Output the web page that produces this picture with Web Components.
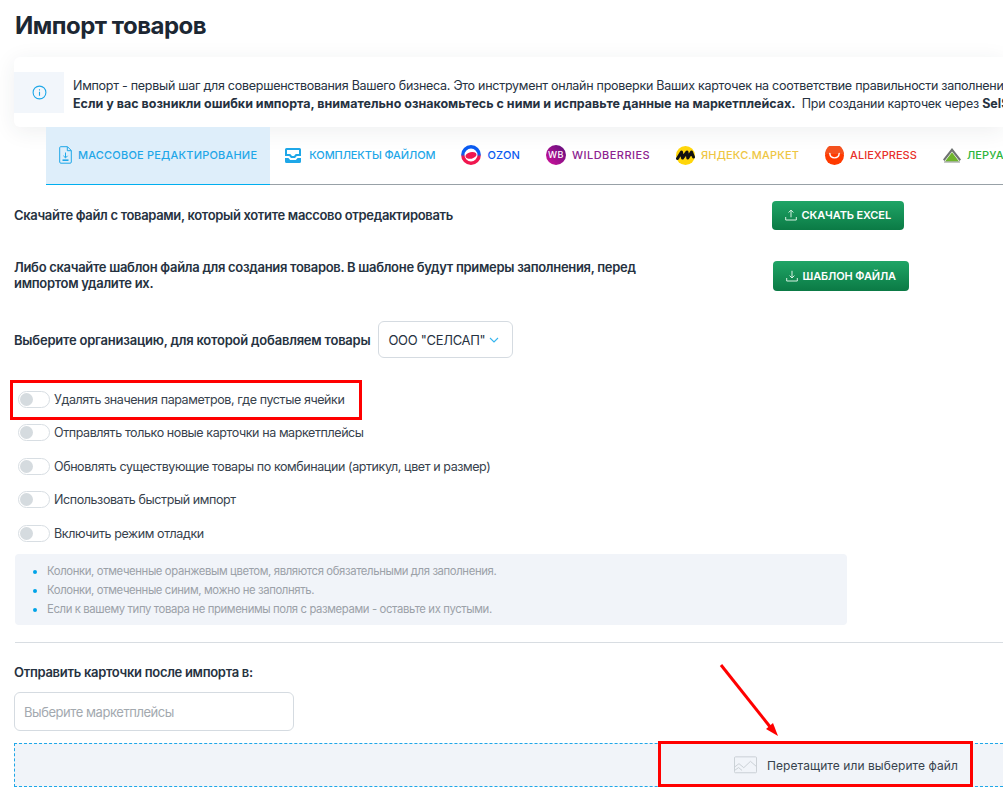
<!DOCTYPE html>
<html lang="ru">
<head>
<meta charset="utf-8">
<title>Импорт товаров</title>
<style>
  html, body { margin: 0; padding: 0; background: #fff; }
  body {
    width: 1003px; height: 795px; overflow: hidden; position: relative;
    font-family: Inter, "Noto Sans", sans-serif; color: #1f2a36;
  }
</style>
</head>
<body>
<import-page></import-page>
<red-marks></red-marks>

<script>
const ICONS = {
  info: `<svg width="15" height="15" viewBox="0 0 15 15" fill="none" stroke="#1ea7e8" stroke-width="1.1"><circle cx="7.5" cy="7.5" r="6.4"/><path d="M7.5 6.8v4M7.5 4.3v1.1"/></svg>`,
  fileDown: `<svg width="13" height="18" viewBox="0 0 13 18" fill="none" stroke="#1ea7e8" stroke-width="1"><path d="M1.7.7h6.8L12.300 4.500V16a1.200 1.200 0 0 1-1.200 1.200H1.900A1.200 1.200 0 0 1 .7 16V1.700A1 1 0 0 1 1.700.7z"/><path d="M8.300.8v3.900h3.900"/><path d="M6.500 6.500v5M4.400 9.800l2.100 2.100 2.100-2.100"/><path d="M3.500 14.200h6" stroke-width="1.600"/></svg>`,
  tray: `<svg width="16" height="15" viewBox="0 0 16 15"><path fill="#1ea7e8" d="M1.500 0h13A1.500 1.500 0 0 1 16 1.500V8h-4.200L10 10H6L4.200 8H0V1.500A1.500 1.500 0 0 1 1.500 0zM2 2v4h3.200L7 8h2l1.800-2H14V2z"/><path fill="#1ea7e8" d="M0 10h3.400L5.200 12h5.600L12.600 10H16v3.500a1.500 1.500 0 0 1-1.500 1.500h-13A1.500 1.500 0 0 1 0 13.500z"/></svg>`,
  ozon: `<svg width="20" height="20" viewBox="0 0 20 20"><defs><linearGradient id="oz" x1="0" y1="0" x2="0" y2="1"><stop offset=".45" stop-color="#0a5bf0"/><stop offset=".6" stop-color="#f0174f"/></linearGradient></defs><circle cx="10" cy="10" r="8.200" fill="#fff" stroke="url(#oz)" stroke-width="3.400"/><ellipse cx="10" cy="10.400" rx="5.600" ry="3.300" fill="#f0174f" transform="rotate(-12 10 10.400)"/></svg>`,
  wb: `<svg width="20" height="20" viewBox="0 0 20 20"><defs><linearGradient id="wbg" x1="0" y1="1" x2="1" y2="0"><stop offset="0" stop-color="#d4119b"/><stop offset="1" stop-color="#5c0f7c"/></linearGradient></defs><circle cx="10" cy="10" r="10" fill="url(#wbg)"/><text x="10" y="13.200" text-anchor="middle" font-family="Inter, sans-serif" font-size="9" font-weight="500" fill="#fff">WB</text></svg>`,
  yandex: `<svg width="19" height="19" viewBox="0 0 19 19"><circle cx="9.500" cy="9.500" r="9.500" fill="#ffd60a"/><path d="M1.500 12.500 5.500 6l1 6L11 6l.8 6L15.500 6l2 5" fill="none" stroke="#111" stroke-width="3" stroke-linecap="round" stroke-linejoin="round"/></svg>`,
  ali: `<svg width="19" height="19" viewBox="0 0 19 19"><circle cx="9.500" cy="9.500" r="9.500" fill="#ff3a00"/><path d="M0 8a9.500 9.500 0 0 1 19 0z" fill="#f4511e"/><path d="M4.800 7.400c.5 6 8.900 6 9.400 0" fill="none" stroke="#fff" stroke-width="1.400" stroke-linecap="round"/></svg>`,
  leroy: `<svg width="18" height="15" viewBox="0 0 18 15"><path d="M9 0 18 11.500 16.500 13 9 3.600 1.500 13 0 11.500z" fill="#6f7472"/><path d="M9 4.200 16 13.500H2z" fill="#6fb52c"/><path d="M1 14h16" stroke="#8a8f8c" stroke-width="1"/></svg>`,
  upload: `<svg width="12" height="12" viewBox="0 0 12 12" fill="none" stroke="#d7f0e2" stroke-width="1"><path d="M6 8.300V1.200M3.600 3.500 6 1.100l2.400 2.400M.7 8v3h10.600V8"/></svg>`,
  download: `<svg width="12" height="12" viewBox="0 0 12 12" fill="none" stroke="#d7f0e2" stroke-width="1"><path d="M6 .8v7.100M3.600 5.600 6 8l2.400-2.400M.7 8v3h10.600V8"/></svg>`,
  chevron: `<svg width="10" height="6" viewBox="0 0 10 6" fill="none" stroke="#35b5ee" stroke-width="1.100"><path d="M1 1l4 4 4-4"/></svg>`,
  picture: `<svg width="23" height="18" viewBox="0 0 24 18" fill="none" stroke="#c9cfd4" stroke-width="1"><rect x=".5" y=".5" width="23" height="16.600" rx="1"/><path d="M.8 11l4.400-3.400 5 4.200 7-6.600 6 5.200M.8 14.500l4-2.800 3.600 3"/></svg>`
};

class ImportPage extends HTMLElement {
  constructor() {
    super();
    this.attachShadow({mode: 'open'});
    this.shadowRoot.innerHTML = `
      <style>
        :host { display: block; width: 1003px; }
        h1 { margin: 0; padding: 12px 0 0 15px; font-size: 24px; line-height: 27px; font-weight: 700; letter-spacing: -.5px; color: #1c2733; }
        notice-card b { letter-spacing: 0; }
        .form { padding-left: 14px; }
        .row { display: flex; align-items: center; font-size: 13px; font-weight: 600; letter-spacing: -.33px; line-height: 16px; color: #26323f; }
        .row p { margin: 0 0 2px; }
        .r1 { margin-top: 16px; height: 29px; justify-content: space-between; padding-right: 99px; }
        .r2 { margin-top: 31px; height: 30px; justify-content: space-between; padding-right: 94px; }
        .r2 p { width: 640px; letter-spacing: -.3px; }
        .r3 { margin-top: 30px; height: 37px; gap: 8px; letter-spacing: -.22px; }
        .r3 p { margin: 0; }
        .toggles { margin-top: 31px; display: flex; flex-direction: column; gap: 13.500px; padding-left: 4px; }
        .bottom-label { margin-top: 21px; font-size: 13px; font-weight: 600; letter-spacing: -.3px; line-height: 16px; color: #26323f; }
        .field { box-sizing: border-box; margin-top: 12px; width: 280px; height: 39px; border: 1px solid #d5dbe1; border-radius: 6px; padding-left: 9px; display: flex; align-items: center; font-size: 13px; letter-spacing: -.45px; color: #a3a9af; }
        hr { border: 0; height: 1px; background: #d8dde2; margin: 17px 0 0 1px; }
      </style>
      <h1>Импорт товаров</h1>
      <notice-card>
        <span>Импорт - первый шаг для совершенствования Вашего бизнеса. Это инструмент онлайн проверки Ваших карточек на соответствие правильности заполнения</span>
        <span><b>Если у вас возникли ошибки импорта, внимательно ознакомьтесь с ними и исправьте данные на маркетплейсах.</b>&nbsp; При создании карточек через <b>SelSup</b></span>
      </notice-card>
      <market-tabs></market-tabs>
      <div class="form">
        <div class="row r1"><p>Скачайте файл с товарами, который хотите массово отредактировать</p><green-btn icon="upload">Скачать Excel</green-btn></div>
        <div class="row r2"><p>Либо скачайте шаблон файла для создания товаров. В шаблоне будут примеры заполнения, перед импортом удалите их.</p><green-btn icon="download">Шаблон файла</green-btn></div>
        <div class="row r3"><p>Выберите организацию, для которой добавляем товары</p><org-select>ООО "СЕЛСАП"</org-select></div>
        <div class="toggles">
          <option-toggle>Удалять значения параметров, где пустые ячейки</option-toggle>
          <option-toggle>Отправлять только новые карточки на маркетплейсы</option-toggle>
          <option-toggle>Обновлять существующие товары по комбинации (артикул, цвет и размер)</option-toggle>
          <option-toggle>Использовать быстрый импорт</option-toggle>
          <option-toggle>Включить режим отладки</option-toggle>
        </div>
        <hint-box>
          <li>Колонки, отмеченные оранжевым цветом, являются обязательными для заполнения.</li>
          <li>Колонки, отмеченные синим, можно не заполнять.</li>
          <li>Если к вашему типу товара не применимы поля с размерами - оставьте их пустыми.</li>
        </hint-box>
        <hr>
        <div class="bottom-label">Отправить карточки после импорта в:</div>
        <div class="field">Выберите маркетплейсы</div>
        <drop-zone>Перетащите или выберите файл</drop-zone>
      </div>
    `;
  }
}

class NoticeCard extends HTMLElement {
  constructor() {
    super();
    this.attachShadow({mode: 'open'});
    this.shadowRoot.innerHTML = `
      <style>
        :host { display: block; margin: 18px 0 0 14px; height: 70px; background: #fff; border-radius: 6px 0 0 6px; box-shadow: 0 4px 22px rgba(40,50,60,.08); overflow: hidden; }
        .in { display: flex; align-items: center; height: 100%; }
        .ic { flex: none; width: 50px; height: 41px; background: #f2f6fb; display: flex; align-items: center; justify-content: center; }
        .tx { margin-left: 9px; padding-top: 6px; white-space: nowrap; font-size: 12.500px; letter-spacing: -.27px; line-height: 18px; color: #26323f; }
        ::slotted(span) { display: block; }
      </style>
      <div class="in"><div class="ic">${ICONS.info}</div><div class="tx"><slot></slot></div></div>
    `;
  }
}

class MarketTabs extends HTMLElement {
  constructor() {
    super();
    this.attachShadow({mode: 'open'});
    this.tabs = [
      {name: 'Массовое редактирование', icon: 'fileDown', color: '#1ea7e8', track: .2, active: true},
      {name: 'Комплекты файлом', icon: 'tray', color: '#1ea7e8', track: -.1, gap: 8, pad: 15},
      {name: 'Ozon', icon: 'ozon', color: '#0a5bf0', track: .2},
      {name: 'Wildberries', icon: 'wb', color: '#8d2390', track: .45},
      {name: 'Яндекс.Маркет', icon: 'yandex', color: '#eec643', track: .15},
      {name: 'AliExpress', icon: 'ali', color: '#e8302a', track: .05},
      {name: 'Леруа Мерлен', icon: 'leroy', color: '#2cb53a', track: .15}
    ];
    this.shadowRoot.innerHTML = `
      <style>
        :host { display: block; margin-left: 46px; height: 58px; box-sizing: border-box; border-bottom: 1px solid #98a1a7; }
        .list { display: flex; height: 58px; white-space: nowrap; }
        .tab { flex: none; box-sizing: border-box; height: 58px; padding: 0 13px 2px; display: flex; align-items: center; gap: 6px; font-size: 11px; font-weight: 500; text-transform: uppercase; }
        .tab.active { background: #deeefa; border-bottom: 1px solid #00aeef; padding-bottom: 1px; }
        svg { flex: none; display: block; }
      </style>
      <div class="list">
        ${this.tabs.map(t => `<div class="tab ${t.active ? 'active' : ''}" style="color:${t.color};letter-spacing:${t.track}px;${t.gap ? `gap:${t.gap}px;` : ''}${t.pad ? `padding-left:${t.pad}px;` : ''}">${ICONS[t.icon]}<span>${t.name}</span></div>`).join('')}
      </div>
    `;
  }
}

class GreenBtn extends HTMLElement {
  constructor() {
    super();
    this.attachShadow({mode: 'open'});
  }
  connectedCallback() {
    this.shadowRoot.innerHTML = `
      <style>
        :host { display: inline-flex; flex: none; box-sizing: border-box; height: 100%; align-items: center; gap: 5px; padding: 0 13px 1px; border-radius: 4px; background: linear-gradient(#1fa566, #0b7a45); color: #fff; font-size: 11px; font-weight: 600; letter-spacing: -.12px; text-transform: uppercase; }
        svg { display: block; }
      </style>
      ${ICONS[this.getAttribute('icon')]}<slot></slot>
    `;
  }
}

class OrgSelect extends HTMLElement {
  constructor() {
    super();
    this.attachShadow({mode: 'open'});
    this.shadowRoot.innerHTML = `
      <style>
        :host { display: inline-flex; box-sizing: border-box; height: 37px; width: 135px; align-items: center; gap: 4px; padding-left: 9px; border: 1px solid #d5dbe1; border-radius: 6px; font-size: 13px; font-weight: 400; letter-spacing: -.3px; color: #26323f; white-space: nowrap; }
      </style>
      <slot></slot>${ICONS.chevron}
    `;
  }
}

class OptionToggle extends HTMLElement {
  constructor() {
    super();
    this.attachShadow({mode: 'open'});
    this.shadowRoot.innerHTML = `
      <style>
        :host { display: flex; align-items: center; gap: 4px; height: 20px; font-size: 12.500px; letter-spacing: -.41px; color: #37424d; white-space: nowrap; }
        .sw { box-sizing: border-box; width: 32px; height: 17px; border: 1px solid #d8dee3; border-radius: 9px; padding: 1px; background: #fff; flex: none; }
        .sw i { display: block; width: 13px; height: 13px; border-radius: 50%; background: #d5dbdf; }
      </style>
      <div class="sw"><i></i></div><slot></slot>
    `;
  }
}

class HintBox extends HTMLElement {
  constructor() {
    super();
    this.attachShadow({mode: 'open'});
    this.shadowRoot.innerHTML = `
      <style>
        :host { display: block; box-sizing: border-box; margin: 11px 0 0 1px; width: 832px; height: 71px; padding: 8px 0 0 32px; background: #f1f4f9; border-radius: 4px; }
        ul { margin: 0; padding: 0; }
        ::slotted(li) { font-size: 11.300px; letter-spacing: -.37px; line-height: 19.200px; color: #9ba1a8; }
        ::slotted(li)::marker { color: #00a3e8; }
      </style>
      <ul><slot></slot></ul>
    `;
  }
}

class DropZone extends HTMLElement {
  constructor() {
    super();
    this.attachShadow({mode: 'open'});
    this.shadowRoot.innerHTML = `
      <style>
        :host { display: flex; box-sizing: border-box; margin-top: 12px; height: 44px; align-items: center; justify-content: flex-end; gap: 10px; padding-right: 45px; background: #f1f4f9; border: 1px dashed #1ea7e8; border-right: 0; font-size: 12px; letter-spacing: .07px; color: #37424d; }
      </style>
      ${ICONS.picture}<slot></slot>
    `;
  }
}

// annotations lying over the screenshot: red frames and the arrow
class RedMarks extends HTMLElement {
  constructor() {
    super();
    this.attachShadow({mode: 'open'});
    this.shadowRoot.innerHTML = `
      <style>
        :host { display: block; position: absolute; inset: 0; pointer-events: none; }
        svg { display: block; }
      </style>
      <svg width="1003" height="795" viewBox="0 0 1003 795" fill="none">
        <rect x="11.500" y="381.500" width="349" height="37" stroke="#f00" stroke-width="3"/>
        <rect x="659.500" y="742.500" width="312" height="43" stroke="#f00" stroke-width="3"/>
        <path d="M721 665 771 728" stroke="#f00" stroke-width="3"/>
        <path d="M778 736 766 729 773 723z" fill="#f00"/>
      </svg>
    `;
  }
}

customElements.define('import-page', ImportPage);
customElements.define('notice-card', NoticeCard);
customElements.define('market-tabs', MarketTabs);
customElements.define('green-btn', GreenBtn);
customElements.define('org-select', OrgSelect);
customElements.define('option-toggle', OptionToggle);
customElements.define('hint-box', HintBox);
customElements.define('drop-zone', DropZone);
customElements.define('red-marks', RedMarks);
</script>
</body>
</html>
